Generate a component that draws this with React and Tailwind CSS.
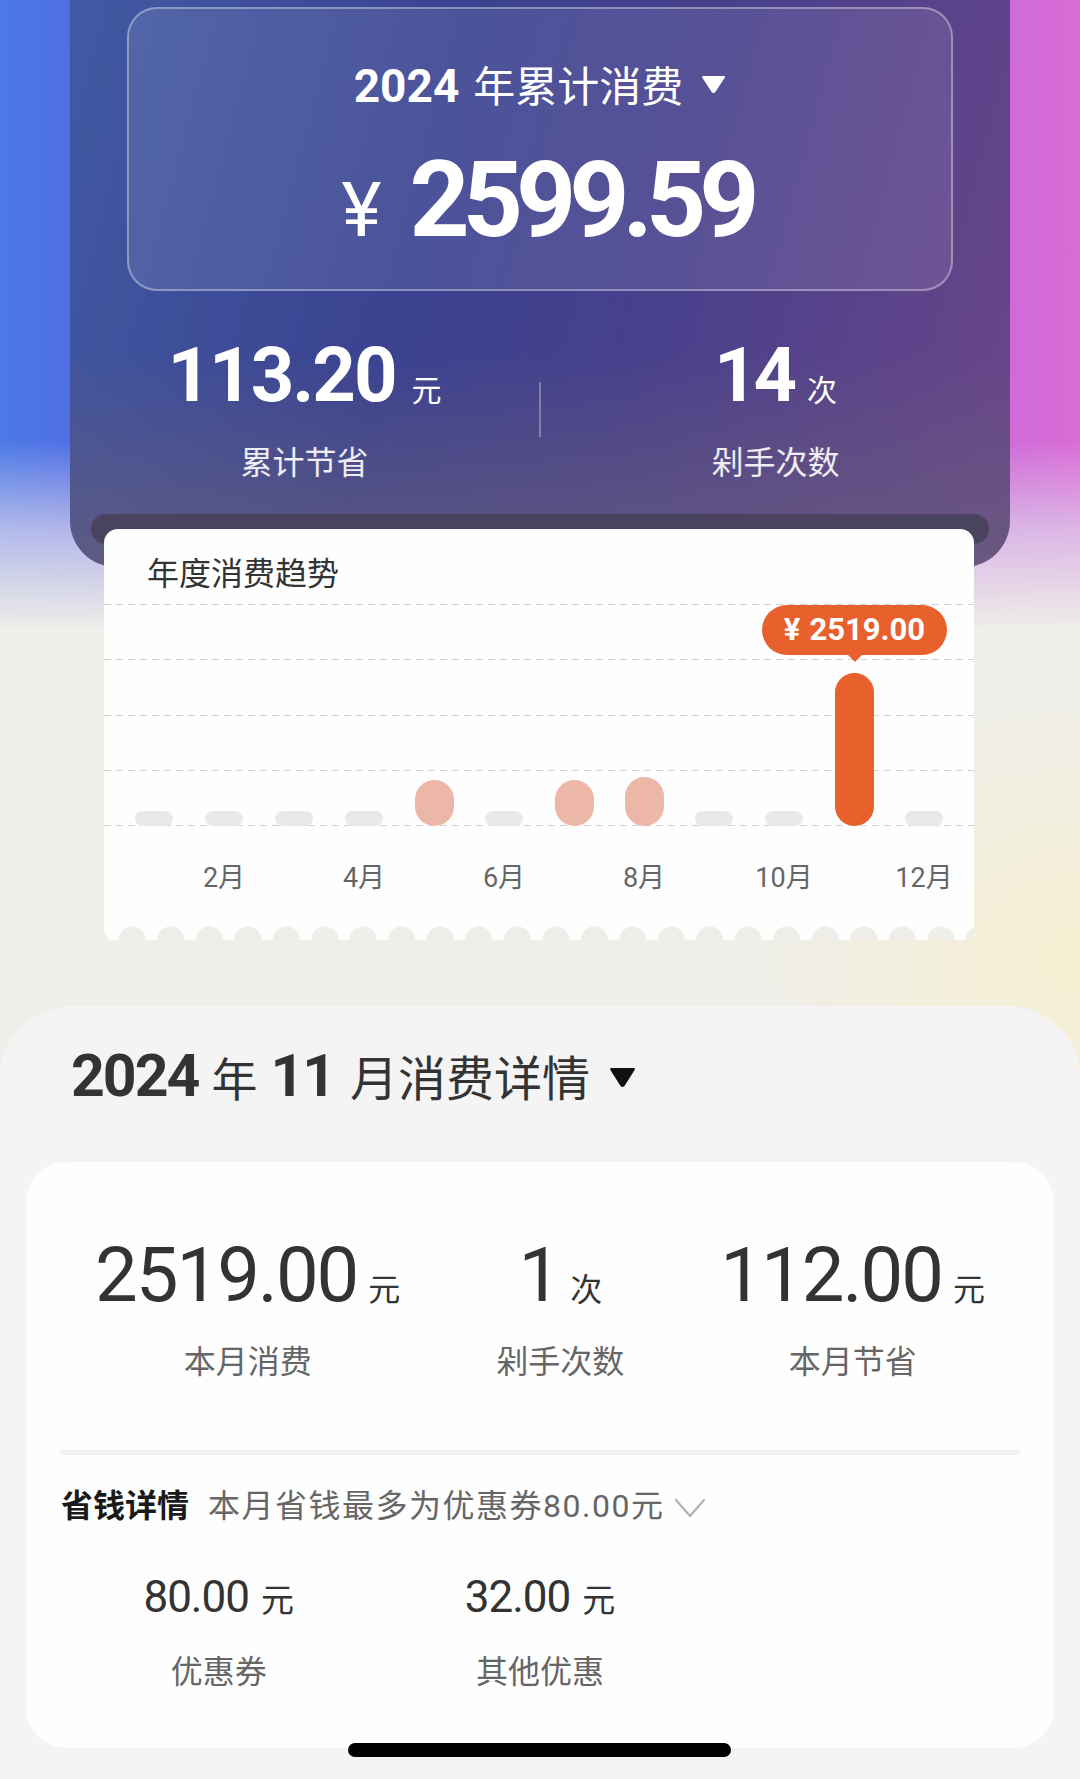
import React from "react";

const FONT = "font-['Roboto','Noto_Sans_CJK_SC',sans-serif]";

const bars = [
  { h: 15, c: "bg-[#e9e9e9]", w: "w-[38px]" },
  { h: 15, c: "bg-[#e9e9e9]", w: "w-[38px]" },
  { h: 15, c: "bg-[#e9e9e9]", w: "w-[38px]" },
  { h: 15, c: "bg-[#e9e9e9]", w: "w-[38px]" },
  { h: 46, c: "bg-[#ecb7a7]", w: "w-[39px]" },
  { h: 15, c: "bg-[#e9e9e9]", w: "w-[38px]" },
  { h: 46, c: "bg-[#ecb7a7]", w: "w-[39px]" },
  { h: 49, c: "bg-[#ecb7a7]", w: "w-[39px]" },
  { h: 15, c: "bg-[#e9e9e9]", w: "w-[38px]" },
  { h: 15, c: "bg-[#e9e9e9]", w: "w-[38px]" },
  { h: 153, c: "bg-[#e8602c]", w: "w-[39px]" },
  { h: 15, c: "bg-[#e9e9e9]", w: "w-[38px]" },
];

const gridTops = ["top-[0px]", "top-[55px]", "top-[111px]", "top-[166px]", "top-[221px]"];

function Tri({ color, className, w = 25, h = 18 }) {
  return (
    <svg className={className} width={w} height={h} viewBox="0 0 25 18" preserveAspectRatio="none">
      <path d="M2 2 L23 2 L13.5 16.5 Q12.5 17.5 11.5 16.5 Z" fill={color} stroke={color} strokeWidth="2" strokeLinejoin="round" />
    </svg>
  );
}

function Stat({ num, unit, label }) {
  return (
    <div className="flex flex-col items-center">
      <div className="flex items-baseline h-[70px] text-[#333]">
        <span className="text-[76px] font-normal leading-[70px] tracking-[-2px]">{num}</span>
        <span className="ml-[11px] text-[32px]">{unit}</span>
      </div>
      <div className="mt-[32px] text-[32px] leading-[40px] text-[#666]">{label}</div>
    </div>
  );
}

export default function App() {
  return (
    <div
      className={`relative w-[1080px] h-[1779px] overflow-hidden ${FONT} bg-[radial-gradient(ellipse_320px_260px_at_100%_960px,#f6f0d2,rgba(246,240,210,0)),linear-gradient(to_bottom,rgba(239,238,232,0)_0px,rgba(239,238,232,0)_440px,rgba(222,214,236,0.7)_530px,#efeee8_630px),linear-gradient(to_right,#4b79e6_0%,#5466e4_12%,#7b60d8_50%,#c869d9_88%,#d96cd6_100%)]`}
    >
      {/* dark summary card */}
      <div className="ml-[70px] w-[940px] h-[567px] rounded-b-[46px] flex flex-col bg-[linear-gradient(to_bottom,rgba(100,92,120,0)_62%,rgba(104,94,124,0.75)_100%),linear-gradient(105deg,#415aa3_0%,#3a4290_38%,#47408c_60%,#6c4689_100%)]">
        <div className="mt-[7px] mx-[57px] h-[284px] rounded-[30px] border-2 border-white/35 bg-white/[0.09] flex flex-col items-center">
          <div className="mt-[52px] h-[50px] flex items-baseline text-white">
            <span className="text-[46px] font-bold leading-[50px]">2024</span>
            <span className="ml-[14px] text-[42px] leading-[50px]">年累计消费</span>
            <Tri color="#ffffff" className="ml-[18px] self-start mt-[14px]" />
          </div>
          <div className="mt-[35px] ml-[14px] h-[110px] flex items-baseline text-white">
            <span className="text-[76px] leading-[110px]">¥</span>
            <span className="ml-[28px] text-[105px] font-bold leading-[110px] tracking-[-7px]">2599.59</span>
          </div>
        </div>

        <div className="mt-[44px] flex items-center">
          <div className="flex-1 flex flex-col items-center">
            <div className="flex items-baseline h-[80px] text-white">
              <span className="text-[76px] font-bold leading-[80px] tracking-[-2px]">113.20</span>
              <span className="ml-[16px] text-[30px]">元</span>
            </div>
            <div className="mt-[28px] text-[32px] leading-[40px] text-white/90">累计节省</div>
          </div>
          <div className="w-[2px] h-[55px] bg-white/30" />
          <div className="flex-1 flex flex-col items-center">
            <div className="flex items-baseline h-[80px] text-white">
              <span className="text-[76px] font-bold leading-[80px] tracking-[-4px]">14</span>
              <span className="ml-[14px] text-[30px]">次</span>
            </div>
            <div className="mt-[28px] text-[32px] leading-[40px] text-white/90">剁手次数</div>
          </div>
        </div>

        <div className="mt-[31px] mx-[21px] h-[30px] rounded-[16px] bg-[#4a4360]" />
      </div>

      {/* yearly trend card */}
      <div className="relative z-10 -mt-[38px] ml-[104px] w-[870px] h-[411px] bg-[#fefefe] rounded-t-[14px] rounded-b-[8px] flex flex-col overflow-hidden">
        <div className="pt-[25px] pl-[43px] text-[32px] leading-[40px] text-[#333]">年度消费趋势</div>
        <div className="relative mt-[10px] h-[222px]">
          {gridTops.map((t) => (
            <div
              key={t}
              className={`absolute left-0 right-0 h-px ${t} bg-[repeating-linear-gradient(to_right,#d2d2d2_0px,#d2d2d2_7px,rgba(0,0,0,0)_7px,rgba(0,0,0,0)_12px)]`}
            />
          ))}
          <div className="absolute inset-0 flex items-end pl-[15px]">
            {bars.map((b, i) => (
              <div key={i} className="w-[70px] flex justify-center">
                <div className={`${b.w} ${b.c} rounded-full`} style={{ height: b.h }} />
              </div>
            ))}
          </div>
          <div className="absolute left-[658px] top-[1px] w-[185px] h-[50px] rounded-full bg-[#e8602c] flex items-center justify-center text-white text-[31px] font-bold">
            <span>¥</span>
            <span className="ml-[9px]">2519.00</span>
            <div className="absolute left-[85px] bottom-[-7px] w-0 h-0 border-l-[8px] border-r-[8px] border-t-[8px] border-l-transparent border-r-transparent border-t-[#e8602c]" />
          </div>
        </div>
        <div className="mt-[37px] h-[30px] flex pl-[15px]">
          {bars.map((b, i) => (
            <div key={i} className="w-[70px] text-center text-[27px] leading-[30px] text-[#666]">
              {i % 2 === 1 ? `${i + 1}月` : ""}
            </div>
          ))}
        </div>
        <div className="mt-auto h-[14px] w-full bg-[radial-gradient(circle_at_50%_100%,#eeede7_13px,rgba(238,237,231,0)_14px)] bg-[length:38.5px_14px] bg-[position:9px_0] bg-repeat-x" />
      </div>

      {/* bottom sheet */}
      <div className="mt-[66px] h-[773px] rounded-t-[72px] bg-[#f4f4f4] flex flex-col">
        <div className="pt-[40px] pl-[71px] h-[100px] flex items-baseline text-[#333]">
          <span className="text-[59px] font-bold leading-[60px] tracking-[-2px]">2024</span>
          <span className="ml-[13px] text-[46px] leading-[60px]">年</span>
          <span className="ml-[13px] text-[59px] font-bold leading-[60px] tracking-[-2px]">11</span>
          <span className="ml-[16px] text-[48px] leading-[60px]">月消费详情</span>
          <Tri color="#111111" w={27} h={20} className="ml-[19px] self-start mt-[21px]" />
        </div>

        <div className="mt-[56px] mx-[26px] h-[586px] bg-[#fefefe] rounded-[40px] flex flex-col">
          <div className="pt-[78px] px-[21px] flex justify-around">
            <Stat num="2519.00" unit="元" label="本月消费" />
            <Stat num="1" unit="次" label="剁手次数" />
            <Stat num="112.00" unit="元" label="本月节省" />
          </div>

          <div className="mt-[68px] mx-[34px] h-[5px] rounded-full bg-[#f2f2f2]" />

          <div className="mt-[31px] pl-[35px] h-[40px] flex items-center">
            <span className="text-[32px] font-bold leading-[40px] text-[#1a1a1a]">省钱详情</span>
            <span className="ml-[19px] text-[32px] leading-[40px] tracking-[1.5px] text-[#666]">本月省钱最多为优惠券80.00元</span>
            <svg className="ml-[10px] mt-[4px]" width="32" height="22" viewBox="0 0 32 22">
              <polyline points="2,3 16,19 30,3" fill="none" stroke="#b3b3b3" strokeWidth="2.2" strokeLinecap="round" strokeLinejoin="round" />
            </svg>
          </div>

          <div className="mt-[46px] px-[32px] grid grid-cols-3">
            <div className="flex flex-col items-center">
              <div className="flex items-baseline h-[50px] text-[#333]">
                <span className="text-[44px] font-normal leading-[50px] tracking-[-1px]">80.00</span>
                <span className="ml-[12px] text-[33px]">元</span>
              </div>
              <div className="mt-[30px] text-[32px] leading-[40px] text-[#666]">优惠券</div>
            </div>
            <div className="flex flex-col items-center">
              <div className="flex items-baseline h-[50px] text-[#333]">
                <span className="text-[44px] font-normal leading-[50px] tracking-[-1px]">32.00</span>
                <span className="ml-[12px] text-[33px]">元</span>
              </div>
              <div className="mt-[30px] text-[32px] leading-[40px] text-[#666]">其他优惠</div>
            </div>
            <div />
          </div>
        </div>
      </div>

      {/* home indicator */}
      <div className="absolute z-20 bottom-[22px] left-[348px] w-[383px] h-[14px] rounded-full bg-black" />
    </div>
  );
}
